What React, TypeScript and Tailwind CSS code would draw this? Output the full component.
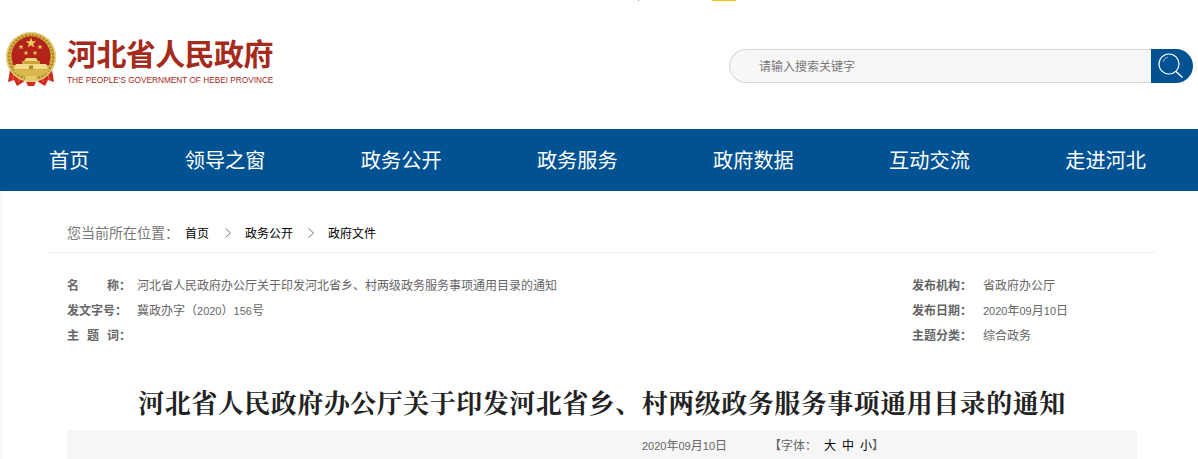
import type { ReactNode } from "react";

const cjk = "font-['SimSun','Noto_Sans_CJK_SC',sans-serif]";

function Emblem() {
  const star = (cx: number, cy: number, r: number, key: string) => {
    const pts: string[] = [];
    for (let i = 0; i < 10; i++) {
      const a = (-90 + i * 36) * Math.PI / 180;
      const rr = i % 2 === 0 ? r : r * 0.4;
      pts.push(`${cx + rr * Math.cos(a)},${cy + rr * Math.sin(a)}`);
    }
    return <polygon key={key} points={pts.join(" ")} fill="#eec95a" />;
  };
  return (
    <svg width="52" height="55" viewBox="0 0 52 55" className="shrink-0">
      {/* ribbons */}
      <path d="M5 38 L3 50 L9 48 L12 54 L20 49 L32 49 L40 54 L43 48 L49 50 L47 38 Z" fill="#cf2a1e" />
      <path d="M9 40 L8 48 M14 42 L14 50 M38 42 L38 50 M43 40 L44 48" stroke="#e8675a" strokeWidth="1" />
      {/* wheat ring */}
      <circle cx="26" cy="25" r="25" fill="#d2ae45" />
      <circle cx="26" cy="25" r="24.4" fill="none" stroke="#efdc95" strokeWidth="1" />
      <circle cx="26" cy="25" r="22" fill="none" stroke="#a9872a" strokeWidth="2.4" strokeDasharray="1.6 2" />
      {/* red disc */}
      <path d="M7.5 30 A19.5 19.5 0 1 1 44.5 30 L44.5 33 L7.5 33 Z" fill="#b3231a" />
      {star(26, 11, 5.6, "a")}
      {star(16, 15, 2.8, "b")}
      {star(35, 15, 2.8, "c")}
      {star(21, 21, 2.7, "d")}
      {star(30, 21, 2.7, "e")}
      {/* gate */}
      <path d="M19 29 L21 26 L31 26 L33 29 Z" fill="#efd77f" />
      <rect x="17" y="29" width="18" height="3" fill="#c9a53c" />
      <path d="M11 32 H41 L43 37 H9 Z" fill="#f0dc8a" />
      <path d="M24 37 V33.5 H28 V37 Z" fill="#a9872a" />
      {/* lower band */}
      <path d="M7 38 H45 Q38 45 26 45 Q14 45 7 38 Z" fill="#d8b84f" />
      <rect x="20" y="44" width="12" height="5" rx="2" fill="#e6cb6a" />
      <path d="M21 50 H31 L29 54 H23 Z" fill="#cf2a1e" />
    </svg>
  );
}

const N = ({ children }: { children: ReactNode }) => (
  <span className="font-['Liberation_Sans',sans-serif] text-[11px] leading-none">{children}</span>
);

const Label = ({ children, right }: { children: ReactNode; right?: boolean }) => (
  <span className={`${right ? "w-[71px]" : "w-[70px]"} shrink-0 font-bold text-[#666] whitespace-nowrap`}>{children}</span>
);

const Chevron = ({ className }: { className: string }) => (
  <svg width="6" height="10" viewBox="0 0 6 10" fill="none" stroke="#777" strokeWidth="1" className={className}>
    <path d="M0.5 0.5 L5.5 5 L0.5 9.5" />
  </svg>
);

const Row = ({ children }: { children: ReactNode }) => (
  <div className="flex h-[25px] items-center">{children}</div>
);

const nav = ["首页", "领导之窗", "政务公开", "政务服务", "政府数据", "互动交流", "走进河北"];

export default function App() {
  return (
    <div className={`relative w-[1198px] h-[459px] overflow-hidden bg-white ${cjk}`}>
      <div className="relative h-[129px]">
        <div className="absolute left-[638px] top-0 w-px h-px bg-[#999]" />
        <div className="absolute left-[712px] top-0 w-[24px] h-px bg-[#ffc000]" />
        <div className="flex items-start justify-between pt-[32px] pl-[5px] pr-[5px]">
          <div className="flex items-start gap-[10px]">
            <Emblem />
            <div className="flex flex-col pt-[3px] font-['Noto_Sans_CJK_SC',sans-serif] text-[#a42a1c]">
              <div className="text-[30px] leading-[34px] font-bold tracking-[-0.6px]">河北省人民政府</div>
              <div className="mt-[7px] text-[8.25px] leading-[10px] font-['Liberation_Sans',sans-serif] whitespace-nowrap">THE PEOPLE&apos;S GOVERNMENT OF HEBEI PROVINCE</div>
            </div>
          </div>
          <div className="mt-[17px] flex h-[34px] w-[464px]">
            <div className="flex flex-1 items-center rounded-l-[17px] border border-r-0 border-[#d5d5d5] bg-[#f7f7f7] pl-[29px] text-[12px] text-[#777]">请输入搜索关键字</div>
            <div className="flex w-[42px] items-center pl-[7px] rounded-r-[17px] bg-[#005293]">
              <svg width="26" height="26" viewBox="0 0 26 26" fill="none" stroke="#fff">
                <circle cx="11" cy="11" r="10" strokeWidth="1.2" />
                <path d="M18 18.5 L24.5 24.5" strokeWidth="1.4" />
                <path d="M5 9 A7 7 0 0 1 10 4" strokeWidth="1" stroke="#8fb4d4" />
              </svg>
            </div>
          </div>
        </div>
      </div>

      <nav className="flex h-[62px] items-center justify-between bg-[#005293] pl-[49px] pr-[52px] text-[20.2px] text-white font-['Noto_Sans_CJK_SC',sans-serif]">
        {nav.map((n) => (
          <span key={n}>{n}</span>
        ))}
      </nav>

      <div className="absolute left-0 top-[191px] bottom-0 w-[2px] bg-[#f7f7f7]" />

      <div className="ml-[67px] mr-[41px]">
        <div className="-ml-[20px] flex h-[62px] items-center border-b border-[#f2f2f2] pl-[20px] pt-[22px] text-[12px] text-black">
          <span className="text-[14px] text-[#777]">您当前所在位置：</span>
          <span className="ml-[6px]">首页</span>
          <Chevron className="ml-[16px] mr-[14px]" />
          <span>政务公开</span>
          <Chevron className="ml-[15px] mr-[14px]" />
          <span>政府文件</span>
        </div>

        <div className="flex pt-[19px] text-[12px] text-[#666]">
          <div className="w-[845px]">
            <Row>
              <Label><span className="tracking-[28px]">名</span>称：</Label>
              <span>河北省人民政府办公厅关于印发河北省乡、村两级政务服务事项通用目录的通知</span>
            </Row>
            <Row>
              <Label>发文字号：</Label>
              <span>冀政办字（<N>2020</N>）<N>156</N>号</span>
            </Row>
            <Row>
              <Label><span className="tracking-[8px]">主题</span>词：</Label>
            </Row>
          </div>
          <div>
            <Row><Label right>发布机构：</Label><span>省政府办公厅</span></Row>
            <Row><Label right>发布日期：</Label><span><N>2020</N>年<N>09</N>月<N>10</N>日</span></Row>
            <Row><Label right>主题分类：</Label><span>综合政务</span></Row>
          </div>
        </div>

        <h1 className="mt-[37px] mr-[20px] text-center text-[26px] leading-[36px] font-bold tracking-[0.5px] text-[#222] font-['Noto_Serif_CJK_SC','SimSun','Noto_Sans_CJK_SC',serif]">河北省人民政府办公厅关于印发河北省乡、村两级政务服务事项通用目录的通知</h1>

        <div className="mt-[10px] mr-[20px] flex h-[30px] items-center bg-[#f6f6f6] pl-[575px] text-[12px] text-[#666]">
          <span className="leading-none"><N>2020</N>年<N>09</N>月<N>10</N>日</span>
          <span className="ml-[42px]">【字体：</span>
          <span className="ml-[7px] text-black tracking-[6px]">大中</span>
          <span className="text-black">小</span>
          <span>】</span>
        </div>
      </div>
    </div>
  );
}
